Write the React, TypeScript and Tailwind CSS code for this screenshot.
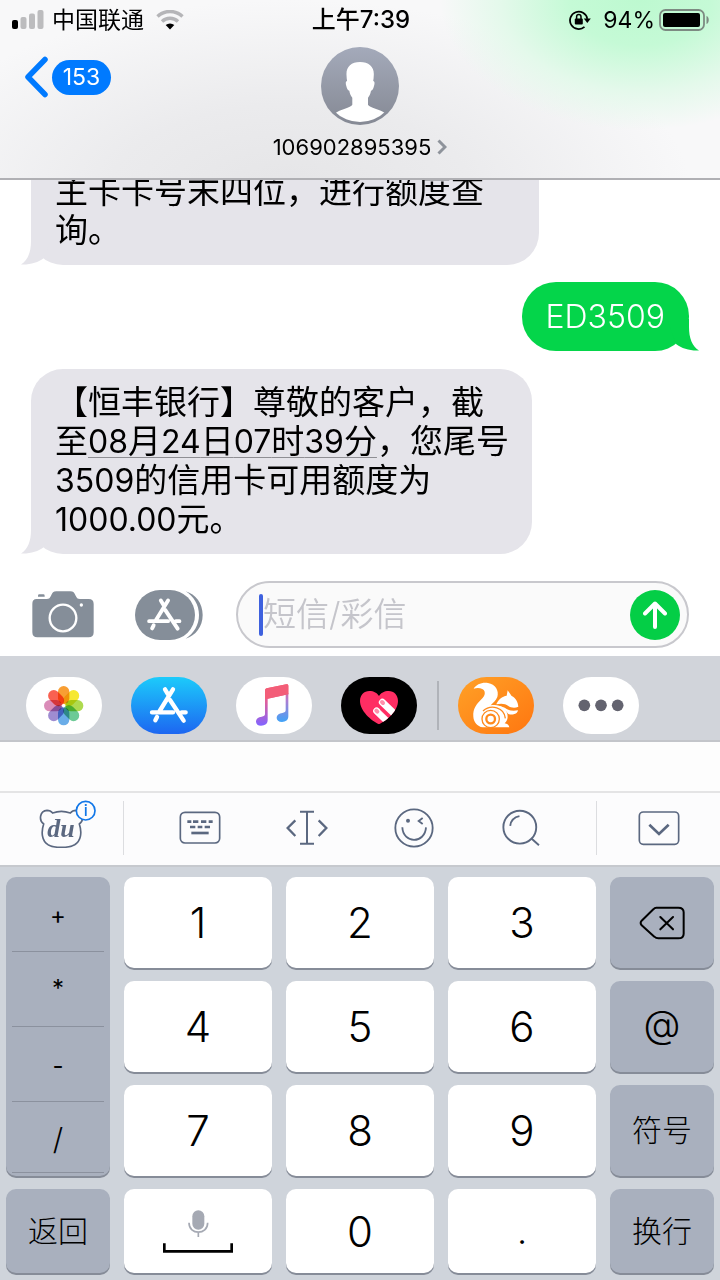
import type { ReactNode } from "react";

const fontStack = "font-['Inter','Noto_Sans_CJK_SC',sans-serif]";

function SignalIcon() {
  return (
    <svg width="32" height="20" viewBox="0 0 32 20" aria-hidden="true">
      <rect x="0" y="10" width="6" height="9" rx="2" fill="#000" />
      <rect x="8.5" y="7" width="6" height="12" rx="2" fill="#bcbcbe" />
      <rect x="17" y="3.500" width="6" height="15.500" rx="2" fill="#bcbcbe" />
      <rect x="25.500" y="0" width="6" height="19" rx="2" fill="#bcbcbe" />
    </svg>
  );
}

function WifiIcon() {
  return (
    <svg width="28" height="20" viewBox="0 0 28 20" fill="none" aria-hidden="true">
      <path d="M1.500 6.500a18 18 0 0 1 25 0" stroke="#b5b5b8" strokeWidth="3.400" />
      <path d="M6 11.500a11.500 11.500 0 0 1 16 0" stroke="#b5b5b8" strokeWidth="3.400" />
      <path d="M14 19.500l-4.300-4.400a6.500 6.500 0 0 1 8.600 0z" fill="#000" />
    </svg>
  );
}

function RotationLockIcon() {
  return (
    <svg width="22" height="20" viewBox="0 0 22 20" fill="none" aria-hidden="true">
      <path d="M15.500 16.900A8.700 8.700 0 1 1 18.300 8.800" stroke="#000" strokeWidth="1.800" />
      <path d="M14.800 8.500h7l-3.500 4.600z" fill="#000" />
      <rect x="5.800" y="8.600" width="8" height="6" rx="1" fill="#000" />
      <path d="M7.600 9V6.800a2.200 2.200 0 0 1 4.400 0V9" stroke="#000" strokeWidth="1.500" />
    </svg>
  );
}

function BatteryIcon() {
  return (
    <svg width="51" height="22" viewBox="0 0 51 22" fill="none" aria-hidden="true">
      <rect x="1" y="1" width="44" height="20" rx="5.500" stroke="#7d8a82" strokeWidth="1.800" />
      <rect x="4" y="4" width="37" height="14" rx="2" fill="#000" />
      <path d="M47.500 7c3 1 3 7 0 8z" fill="#7d8a82" />
    </svg>
  );
}

function Avatar() {
  return (
    <svg width="78" height="78" viewBox="0 0 78 78" aria-hidden="true">
      <defs>
        <linearGradient id="avatarBg" x1="0" y1="0" x2="0" y2="1">
          <stop offset="0" stopColor="#a4aaba" />
          <stop offset="1" stopColor="#858994" />
        </linearGradient>
        <clipPath id="avatarClip">
          <circle cx="39" cy="39" r="36" />
        </clipPath>
      </defs>
      <circle cx="39" cy="39" r="39" fill="url(#avatarBg)" />
      <path
        clipPath="url(#avatarClip)"
        fill="#fff"
        d="M39 15c-9 0-14 5-13.500 13 .1 2.500.3 4.500.6 6-1.600.3-1.600 2.500-.8 5 .6 2.300 1.500 4.500 3 4.800.6 3.200 1.500 5 3 7v7c-1 3-13 5-17 8.500V80h50V66.300C60 62.800 48 60.800 47 57.800v-7c1.500-2 2.400-3.800 3-7 1.500-.3 2.400-2.500 3-4.800.8-2.500.8-4.700-.8-5 .3-1.500.5-3.500.6-6C53.300 20 48 15 39 15z"
      />
    </svg>
  );
}

function StoreGlyph() {
  return (
    <g fill="none" stroke="#fff" strokeLinecap="round" strokeWidth="13">
      <path d="M6 75h63M95 75h12M69 6L29 71M21 89l-5 10M45 6l9 15M60 38l41 62" />
    </g>
  );
}

function CameraIcon() {
  return (
    <svg width="62" height="47" viewBox="0 0 186 141" aria-hidden="true">
      <path
        fill="#858e99"
        d="M14 24h30c8 0 10-4 13-10C61 5 64 1 73 1h42c9 0 12 4 16 13 3 6 5 10 13 10h26c10 0 15 5 15 15v85c0 10-5 15-15 15H16c-10 0-15-5-15-15V39c0-10 4-15 13-15zM18 17v-3q0-4 4-4h12q4 0 4 4v3z"
      />
      <circle cx="93" cy="81" r="40" fill="none" stroke="#fff" strokeWidth="7" />
      <circle cx="148" cy="42" r="5" fill="#fff" />
    </svg>
  );
}

function StoreDrawerIcon() {
  return (
    <svg width="68" height="50" viewBox="0 0 204 150" aria-hidden="true">
      <path d="M152 4c30 9 51 36 51 71s-21 62-51 71c24-16 40-40 40-71S176 20 152 4z" fill="#858e99" />
      <rect x="0" y="0" width="180" height="150" rx="75" fill="#858e99" />
      <g transform="translate(37 26) scale(.9)">
        <StoreGlyph />
      </g>
    </svg>
  );
}

const petals = ["#f7941d", "#f5e51c", "#a5d63c", "#5dc48b", "#5aa4e6", "#9380cc", "#d67fb0", "#f8503e"];

function PhotosArt() {
  return (
    <svg width="76" height="57" viewBox="0 0 228 171" aria-hidden="true">
      <rect width="228" height="171" fill="#fff" />
      <g transform="translate(113 86)">
        {petals.map((color, i) => (
          <rect
            key={color}
            x="-17"
            y="-59"
            width="34"
            height="54"
            rx="17"
            fill={color}
            fillOpacity="0.9"
            className="mix-blend-multiply"
            transform={`rotate(${i * 45})`}
          />
        ))}
      </g>
    </svg>
  );
}

function StoreArt() {
  return (
    <svg width="76" height="57" viewBox="0 0 228 171" aria-hidden="true">
      <defs>
        <linearGradient id="storeBg" x1="0" y1="0" x2="0" y2="1">
          <stop offset="0" stopColor="#1ccbfb" />
          <stop offset="1" stopColor="#1d66f1" />
        </linearGradient>
      </defs>
      <rect width="228" height="171" fill="url(#storeBg)" />
      <g transform="translate(57 31)">
        <StoreGlyph />
      </g>
    </svg>
  );
}

function MusicArt() {
  return (
    <svg width="76" height="57" viewBox="0 0 228 171" aria-hidden="true">
      <defs>
        <linearGradient id="noteLeft" gradientUnits="userSpaceOnUse" x1="0" y1="30" x2="0" y2="145">
          <stop offset="0" stopColor="#fa5a6c" />
          <stop offset=".4" stopColor="#dd5f9e" />
          <stop offset="1" stopColor="#8264ff" />
        </linearGradient>
        <linearGradient id="noteRight" gradientUnits="userSpaceOnUse" x1="0" y1="22" x2="0" y2="136">
          <stop offset="0" stopColor="#fa5a6c" />
          <stop offset=".4" stopColor="#b27bd0" />
          <stop offset="1" stopColor="#3fa4f8" />
        </linearGradient>
      </defs>
      <rect width="228" height="171" fill="#fff" />
      <path d="M87 40q0-5 5-6l59-12q6-1 6 4v26L95 65v64c0 11-8 17-20 17-9 0-15-5-15-12 0-9 7-14 17-15 7-1 10-3 10-8z" fill="url(#noteLeft)" />
      <path d="M149 50l8-2v70c0 11-8 17-19 17-10 0-16-5-16-12 0-9 7-14 17-15 7-1 10-3 10-8z" fill="url(#noteRight)" />
      <path d="M87 40q0-5 5-6l59-12q6-1 6 4v26L95 65l-8 1z" fill="#f35d78" />
    </svg>
  );
}

function HeartArt() {
  return (
    <svg width="76" height="57" viewBox="0 0 228 171" aria-hidden="true">
      <defs>
        <clipPath id="heartClip">
          <path d="M114 142C90 130 57 102 57 72c0-18 12-30 28-30 13 0 24 6 29 15 5-9 16-15 29-15 16 0 28 12 28 30 0 30-33 58-57 70z" />
        </clipPath>
      </defs>
      <rect width="228" height="171" fill="#000" />
      <g clipPath="url(#heartClip)">
        <rect width="228" height="171" fill="#ff2d63" />
        <g strokeLinecap="round">
          <path d="M124 76l50 48M107 102l50 48" stroke="#fff" strokeWidth="21" />
          <path d="M123 75l3 3M106 101l3 3" stroke="#ff8fab" strokeWidth="12" />
          <path d="M118 98l40 39" stroke="#ff2d63" strokeWidth="3" />
        </g>
      </g>
    </svg>
  );
}

function SquirrelArt() {
  return (
    <svg width="76" height="57" viewBox="0 0 228 171" aria-hidden="true">
      <defs>
        <linearGradient id="squirrelBg" x1="0" y1="0" x2="1" y2="1">
          <stop offset="0" stopColor="#ffa127" />
          <stop offset="1" stopColor="#ff7610" />
        </linearGradient>
      </defs>
      <rect width="228" height="171" fill="url(#squirrelBg)" />
      <path
        fill="#fff"
        d="M47 35c8-13 25-20 43-17 22 4 34 23 28 42-4 12-14 17-20 25 24-5 46 6 50 26 3 14-2 22-8 28 8 1 13 5 14 12H74c-16-3-27-16-28-32-2-25 11-38 22-50 9-9 14-16 12-25-3-10-18-13-33-9z"
      />
      <path fill="#fff" d="M115 82c5-14 18-24 31-26l3-16 12 17c12 5 19 18 20 32-10 5-23 3-30-2-9-7-21-9-36-5z" />
      <path fill="#fff" d="M112 88c14-3 25 2 34 8 9 5 20 7 34 4-1 6-6 11-13 12-5 1-11 1-17-2-8-12-20-20-38-22z" />
      <path d="M75 102c24-22 64-11 67 22" fill="none" stroke="#ff8a1c" strokeWidth="4" />
      <circle cx="98" cy="126" r="26" fill="#fff" stroke="#ff8a1c" strokeWidth="4" />
      <circle cx="98" cy="126" r="13" fill="#fff" stroke="#ff8a1c" strokeWidth="7" />
    </svg>
  );
}

function MoreArt() {
  return (
    <svg width="76" height="57" viewBox="0 0 228 171" aria-hidden="true">
      <rect width="228" height="171" fill="#fff" />
      <g fill="#63636f">
        <circle cx="64" cy="85" r="17.500" />
        <circle cx="114" cy="85" r="17.500" />
        <circle cx="164" cy="85" r="17.500" />
      </g>
    </svg>
  );
}

function Tail({ side }: { side: "left" | "right" }) {
  const place = side === "left" ? "-left-[10px] text-[#e5e4ea]" : "-right-[10px] -scale-x-100 text-[#04d54a]";
  return (
    <svg className={`absolute bottom-0 ${place}`} width="34" height="32" viewBox="0 0 34 32" aria-hidden="true">
      <path fill="currentColor" d="M10 0v8c0 11-3 19-10 23.500 9 .5 17-2 23-6.500L32 0z" />
    </svg>
  );
}

function Latin({ children }: { children: ReactNode }) {
  return <span className="text-[32px]">{children}</span>;
}

function AppButton({ label, children }: { label: string; children: ReactNode }) {
  return (
    <button type="button" aria-label={label} className="h-[57px] w-[76px] shrink-0 overflow-hidden rounded-[29px]">
      {children}
    </button>
  );
}

function ToolButton({ label, children }: { label: string; children: ReactNode }) {
  return (
    <button type="button" aria-label={label} className="flex h-full flex-1 items-center justify-center text-[#5b6880]">
      {children}
    </button>
  );
}

function BearIcon() {
  return (
    <svg width="58" height="48" viewBox="0 0 174 144" fill="none" aria-hidden="true">
      <path
        d="M14 72C-2 60 3 32 24 31c8 0 13 3 17 8 16-6 36-6 53 0 4-5 9-8 17-8 21 1 26 29 10 41 8 24 6 50-14 62-20 11-60 11-80 0C8 122 6 96 14 72z"
        stroke="#5b6880"
        strokeWidth="5"
      />
      <text x="66" y="110" textAnchor="middle" className="font-['Liberation_Serif',serif] text-[78px] font-bold italic" fill="#5b6880">
        du
      </text>
      <circle cx="140" cy="32" r="28" fill="#fcfcfd" stroke="#1277e8" strokeWidth="5" />
      <text x="140" y="49" textAnchor="middle" className="font-['Inter',sans-serif] text-[48px] font-medium" fill="#1277e8">
        i
      </text>
    </svg>
  );
}

function KeyboardIcon() {
  return (
    <svg width="42" height="34" viewBox="0 0 126 102" fill="none" stroke="currentColor" aria-hidden="true">
      <rect x="4" y="4" width="118" height="92" rx="14" strokeWidth="5" />
      <path d="M25 32h12M42 32h16M66 32h16M89 32h12M33 48h16M56 48h14M77 48h16" strokeWidth="8" />
      <path d="M37 66h52" strokeWidth="8" />
    </svg>
  );
}

function CursorIcon() {
  return (
    <svg width="42" height="36" viewBox="0 0 126 108" fill="none" stroke="currentColor" strokeWidth="6" aria-hidden="true">
      <path d="M42 5h42M42 101h42M63 5v96" />
      <path d="M28 31L5 54l23 24M98 31l23 23-23 24" strokeWidth="7" />
    </svg>
  );
}

function SmileIcon() {
  return (
    <svg width="40" height="40" viewBox="0 0 120 120" fill="none" stroke="currentColor" strokeWidth="5.500" aria-hidden="true">
      <circle cx="60" cy="60" r="56" />
      <circle cx="42" cy="38" r="6" fill="currentColor" stroke="none" />
      <path d="M86 30L74 39l12 9M25 58c2 50 68 50 71 0" />
    </svg>
  );
}

function SearchIcon() {
  return (
    <svg width="38" height="38" viewBox="0 0 111 111" fill="none" stroke="currentColor" strokeWidth="5.500" aria-hidden="true">
      <circle cx="52" cy="53" r="48" />
      <path d="M24 49c2-15 12-25 27-28M86 86l22 20" />
    </svg>
  );
}

function CollapseIcon() {
  return (
    <svg width="42" height="36" viewBox="0 0 126 108" fill="none" stroke="currentColor" aria-hidden="true">
      <rect x="4" y="6" width="118" height="97" rx="12" strokeWidth="5" />
      <path d="M34 44l29 28 29-28" strokeWidth="8" />
    </svg>
  );
}

function Key({ label, tone = "light", children }: { label?: string; tone?: "light" | "dark"; children: ReactNode }) {
  const look = tone === "light" ? "bg-white text-[42px]" : "bg-[#a9b0be] text-[30px]";
  return (
    <button
      type="button"
      aria-label={label}
      className={`flex items-center justify-center rounded-[10px] font-light shadow-[0_2px_0_#868c98] ${look}`}
    >
      {children}
    </button>
  );
}

export default function App() {
  return (
    <div className={`flex min-h-screen flex-col bg-white text-black ${fontStack}`}>
      <header className="relative z-10 h-[180px] border-b-2 border-[#b0b0b4] bg-[#f8f8f9] bg-[radial-gradient(ellipse_200px_130px_at_640px_0px,#bdf9d0_0%,#c5fad6_35%,#e4f9eb_70%,transparent_100%),radial-gradient(ellipse_400px_190px_at_290px_190px,#e5e5e7_0%,#ebebed_45%,transparent_100%)]">
        <div className="grid h-10 grid-cols-[1fr_auto_1fr] items-center pr-[10px] pl-[12px]">
          <div className="flex items-center text-[23px]">
            <SignalIcon />
            <span className="ml-2 mr-3">中国联通</span>
            <WifiIcon />
          </div>
          <div className="text-[24px] font-medium">上午7:39</div>
          <div className="flex items-center justify-end text-[23px]">
            <RotationLockIcon />
            <span className="ml-3 mr-1">94%</span>
            <BatteryIcon />
          </div>
        </div>
        <div className="grid grid-cols-[1fr_auto_1fr] items-start pt-[7px]">
          <button type="button" aria-label="返回，153 条未读" className="ml-6 mt-[9px] flex items-center gap-1 justify-self-start">
            <svg width="24" height="42" viewBox="0 0 24 42" fill="none" aria-hidden="true">
              <path d="M21 3.500L4 21l17 17.500" stroke="#007aff" strokeWidth="5.500" strokeLinecap="round" strokeLinejoin="round" />
            </svg>
            <span className="flex h-[35px] w-[59px] items-center justify-center rounded-full bg-[#007aff] text-[23px] text-white">153</span>
          </button>
          <button type="button" className="flex flex-col items-center">
            <Avatar />
            <span className="mt-2 flex items-center gap-[6px] text-[22px] leading-[28px]">
              106902895395
              <svg width="10" height="16" viewBox="0 0 10 16" fill="none" aria-hidden="true">
                <path d="M1.500 1.500L8 8l-6.500 6.500" stroke="#8e939b" strokeWidth="3" />
              </svg>
            </span>
          </button>
        </div>
      </header>

      <main className="-mt-2 flex flex-1 flex-col pr-[31px] pl-[31px] text-[33px] leading-[39px]">
        <div className="relative w-[508px] max-w-full rounded-b-[32px] bg-[#e5e4ea] pb-[15px] pl-6">
          <Tail side="left" />
          <p className="relative whitespace-pre-line">{"主卡卡号末四位，进行额度查\n询。"}</p>
        </div>
        <div className="relative mt-[17px] self-end rounded-[34px] bg-[#04d54a] px-6 py-[15px] text-white">
          <Tail side="right" />
          <p className="relative text-[32px] font-[350]">ED3509</p>
        </div>
        <div className="relative mt-[18px] w-[501px] max-w-full rounded-[32px] bg-[#e5e4ea] pt-[14px] pb-[15px] pl-6">
          <Tail side="left" />
          <p className="relative whitespace-pre-line">
            {"【恒丰银行】尊敬的客户，截\n至"}
            <a href="#date" className="underline decoration-[#8e8e93] decoration-1 underline-offset-4">
              <Latin>08</Latin>月<Latin>24</Latin>日<Latin>07</Latin>时<Latin>39</Latin>分
            </a>
            {"，您尾号\n"}
            <Latin>3509</Latin>
            {"的信用卡可用额度为\n"}
            <Latin>1000.00</Latin>元。
          </p>
        </div>
      </main>

      <form className="flex items-center pt-[27px] pr-[31px] pb-2 pl-8" onSubmit={(e) => e.preventDefault()}>
        <button type="button" aria-label="相机" className="shrink-0">
          <CameraIcon />
        </button>
        <button type="button" aria-label="应用" className="ml-[41px] shrink-0">
          <StoreDrawerIcon />
        </button>
        <div className="ml-[33px] flex h-[67px] min-w-0 flex-1 items-center rounded-full border-2 border-[#c8c8cd] bg-[#fafafa] pr-[7px] pl-[21px]">
          <span className="h-[42px] w-1 shrink-0 rounded-sm bg-[#3e61de]" />
          <input
            type="text"
            aria-label="短信/彩信"
            placeholder="短信/彩信"
            className="min-w-0 flex-1 bg-transparent text-[33px] font-[350] outline-none placeholder:text-[#c5c5cb]"
          />
          <button type="submit" aria-label="发送" className="flex h-[50px] w-[50px] shrink-0 items-center justify-center rounded-full bg-[#04ce46]">
            <svg width="24" height="28" viewBox="0 0 24 28" fill="none" stroke="#fff" strokeWidth="4" strokeLinecap="round" strokeLinejoin="round" aria-hidden="true">
              <path d="M12 26V2.500M2 12.500l10-10 10 10" />
            </svg>
          </button>
        </div>
      </form>

      <nav className="flex h-[86px] items-center border-b-2 border-[#c3c5ca] bg-[#d1d4da] pt-[14px] pl-[26px]">
        <div className="flex gap-[29px]">
          <AppButton label="照片"><PhotosArt /></AppButton>
          <AppButton label="App Store"><StoreArt /></AppButton>
          <AppButton label="音乐"><MusicArt /></AppButton>
          <AppButton label="Digital Touch"><HeartArt /></AppButton>
        </div>
        <span className="mr-[19px] ml-5 h-[49px] w-[2px] bg-[#b0b3b9]" />
        <div className="flex gap-[29px]">
          <AppButton label="UC"><SquirrelArt /></AppButton>
          <AppButton label="更多"><MoreArt /></AppButton>
        </div>
      </nav>

      <div className="h-[49px] bg-[#fdfdfd]" />

      <div className="flex h-[74px] items-center border-t-2 border-[#e4e4e5] bg-[#fcfcfd] pb-[2px]">
        <div className="flex h-full w-[123px] pb-2 pl-3">
          <ToolButton label="百度输入法"><BearIcon /></ToolButton>
        </div>
        <span className="h-[54px] w-px bg-[#dcdde0]" />
        <div className="flex h-full flex-1 px-[22px]">
          <ToolButton label="键盘"><KeyboardIcon /></ToolButton>
          <ToolButton label="光标"><CursorIcon /></ToolButton>
          <ToolButton label="表情"><SmileIcon /></ToolButton>
          <ToolButton label="搜索"><SearchIcon /></ToolButton>
        </div>
        <span className="h-[54px] w-px bg-[#dcdde0]" />
        <div className="flex h-full w-[123px]">
          <ToolButton label="收起键盘"><CollapseIcon /></ToolButton>
        </div>
      </div>

      <section
        aria-label="数字键盘"
        className="grid grid-cols-[104fr_148fr_148fr_148fr_104fr] grid-rows-[91px_91px_91px_84px] gap-x-[14px] gap-y-[13px] border-t-2 border-[#c6c9ce] bg-[#cfd4db] px-[6px] pt-[10px] pb-[7px]"
      >
        <div className="row-span-3 grid grid-rows-[75px_75px_75px_71px] rounded-[10px] bg-[#a9b0be] px-[6px] text-[24px] shadow-[0_2px_0_#868c98]">
          <button type="button" className="border-b border-[#8b919e] pt-1">+</button>
          <button type="button" className="border-b border-[#8b919e]">*</button>
          <button type="button" className="border-b border-[#8b919e] pt-1">-</button>
          <button type="button" className="border-b border-[#8b919e] pt-1 text-[30px] font-light">/</button>
        </div>
        <Key>1</Key>
        <Key>2</Key>
        <Key>3</Key>
        <Key tone="dark" label="删除">
          <svg width="46" height="34" viewBox="0 0 138 102" fill="none" stroke="#000" strokeWidth="6" strokeLinejoin="round" strokeLinecap="round" aria-hidden="true">
            <path d="M52 5h66q16 0 16 14v64q0 14-16 14H58q-7 0-12-5L8 58q-6-7 0-14L43 10q4-5 9-5zM64 33l38 37M102 33L64 70" />
          </svg>
        </Key>
        <Key>4</Key>
        <Key>5</Key>
        <Key>6</Key>
        <Key tone="dark"><span className="pb-1 text-[38px]">@</span></Key>
        <Key>7</Key>
        <Key>8</Key>
        <Key>9</Key>
        <Key tone="dark">符号</Key>
        <Key tone="dark">返回</Key>
        <Key label="空格">
          <svg width="70" height="43" viewBox="0 0 210 129" fill="none" aria-hidden="true">
            <rect x="88" y="1" width="36" height="58" rx="18" fill="#a5a9b3" />
            <path d="M78 38c0 38 56 38 56 0M106 66v15" stroke="#a5a9b3" strokeWidth="5" />
            <path d="M4 100v24h202v-24" stroke="#000" strokeWidth="8" />
          </svg>
        </Key>
        <Key>0</Key>
        <Key><span className="text-[36px]">.</span></Key>
        <Key tone="dark">换行</Key>
      </section>
    </div>
  );
}
